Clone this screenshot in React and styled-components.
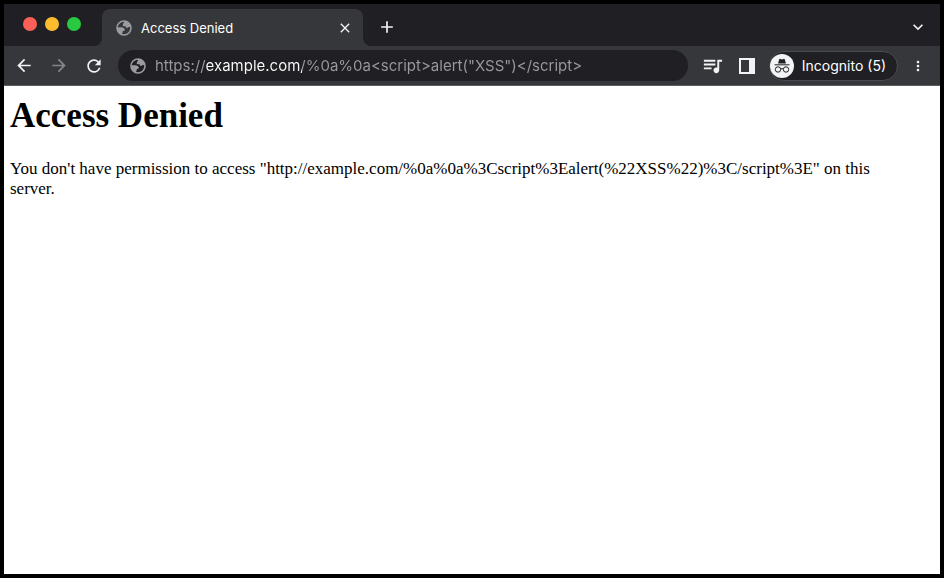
import React, {useState} from 'react';
import styled, {createGlobalStyle} from 'styled-components';
import {
    MdAdd,
    MdArrowBack,
    MdArrowForward,
    MdClose,
    MdKeyboardArrowDown,
    MdMoreVert,
    MdQueueMusic,
    MdRefresh
} from 'react-icons/md';

const color = {
    frame: '#202024',
    toolbar: '#36373a',
    line: '#5c5d60',
    muted: '#9a9b9e',
    icon: '#f1f3f4'
};

const GlobalStyle = createGlobalStyle`
    * {
        box-sizing: border-box;
    }
    body {
        margin: 0;
        background: black;
    }
`

const Window = styled.div`
    display: flex;
    flex-direction: column;
    min-height: 100vh;
    border: 4px solid black;
    background: white;
    font-family: Inter, "Liberation Sans", sans-serif;
`

/* the lower half shows through the rounded bottom corners beside the tab */
const TabStrip = styled.div`
    display: flex;
    height: 42px;
    background: linear-gradient(${color.frame} 50%, ${color.toolbar} 50%);
`

const WindowControls = styled.div`
    display: flex;
    flex: none;
    gap: 8px;
    width: 98px;
    padding: 13px 0 0 19px;
    border-bottom-right-radius: 8px;
    background: ${color.frame};
`

const Light = styled.button`
    width: 14px;
    height: 14px;
    padding: 0;
    border: none;
    border-radius: 50%;
    background: ${props => props.$fill};
`

const Tab = styled.div`
    display: flex;
    align-items: center;
    flex: 0 1 261px;
    gap: 9px;
    margin-top: 5px;
    padding: 0 8px 0 14px;
    border-radius: 8px 8px 0 0;
    background: ${color.toolbar};
    color: white;
`

const TabTitle = styled.span`
    flex: 1;
    overflow: hidden;
    white-space: nowrap;
    font-size: 13px;
    line-height: 20px;
`

const StripRest = styled.div`
    display: flex;
    align-items: center;
    justify-content: space-between;
    flex: 1;
    padding: 4px 12px 0 14px;
    border-bottom-left-radius: 8px;
    background: ${color.frame};
`

const IconButton = styled.button`
    display: flex;
    align-items: center;
    justify-content: center;
    flex: none;
    width: ${props => props.$width || 20}px;
    height: 20px;
    padding: 0;
    border: none;
    background: none;
    color: ${props => props.disabled ? '#85868a' : color.icon};
`

const Toolbar = styled.div`
    display: flex;
    align-items: center;
    height: 40px;
    padding: 0 14px 0 10px;
    border-bottom: 1px solid ${color.line};
    background: ${color.toolbar};
`

const ButtonGroup = styled.div`
    display: flex;
    align-items: center;
    gap: 15px;
    margin-right: 14px;
`

const AddressBar = styled.label`
    display: flex;
    align-items: center;
    flex: 1;
    gap: 9px;
    height: 31px;
    padding: 0 12px;
    border-radius: 16px;
    background: ${color.frame};
    color: ${color.muted};
`

/* the host part of the address is brighter than the rest */
const AddressInput = styled.input`
    flex: 1;
    min-width: 0;
    height: 24px;
    padding: 0;
    border: none;
    outline: none;
    background: linear-gradient(
        to right,
        ${color.muted} 51px,
        white 51px,
        white 147px,
        ${color.muted} 147px
    );
    background-clip: text;
    color: transparent;
    caret-color: white;
    font-family: inherit;
    font-size: 15px;
    line-height: 24px;
`

const Actions = styled.div`
    display: flex;
    align-items: center;
    gap: 12px;
    margin-left: 13px;
`

const Profile = styled.button`
    display: flex;
    align-items: center;
    gap: 8px;
    height: 30px;
    padding: 0 11px 0 0;
    border: 1px solid #4a4b4e;
    border-radius: 15px;
    background: ${color.frame};
    color: white;
    font-family: inherit;
    font-size: 14px;
    line-height: 20px;
    white-space: nowrap;
`

const Page = styled.main`
    flex: 1;
    padding: 10px 40px 10px 6px;
    color: black;
    font-family: "Liberation Serif", serif;
`

const Heading = styled.h1`
    margin: 0 0 23px;
    font-size: 35px;
    line-height: 40px;
`

const Message = styled.p`
    margin: 0;
    font-size: 17px;
    line-height: 20px;
`

const lights = [
    {name: 'Close window', fill: '#ff5f57'},
    {name: 'Minimize window', fill: '#febc2e'},
    {name: 'Zoom window', fill: '#28c840'}
];

const GlobeIcon = () => (
    <svg width="16" height="16" viewBox="0 0 16 16" aria-hidden="true">
        <circle cx="8" cy="8" r="7" fill="none" stroke={color.muted} strokeWidth="1.600"/>
        <path
            fill={color.muted}
            d="M8.200 1c-.2 1 .3 1.300-.7 2.200-.9.800-.3 1.400-.9 2.300.6.900 1.700.7 2.700.8.700.1.500 1.500 1.300 1.700 1.300.3 1.400-.9 2.300-.9H15C14.800 3.600 11.800 1 8.200 1z"/>
        <path
            fill={color.muted}
            d="M1.200 7.200h4.300c1.500 0 3.300 1.200 3.300 2.600 0 1-.9 1.200-1.900 1.300-.4 1.200.1 1.700-.9 2.400l.3 1.300C3.200 14 1 11.200 1.200 7.200z"/>
    </svg>
)

const SidePanelIcon = () => (
    <svg width="16" height="16" viewBox="0 0 16 16" aria-hidden="true">
        <path fill="currentColor" fillRule="evenodd" d="M0 0h16v16H0zM2 2v12h8V2z"/>
    </svg>
)

const IncognitoIcon = () => (
    <svg width="24" height="24" viewBox="0 0 24 24" aria-hidden="true">
        <circle cx="12" cy="12" r="12" fill="#f1f3f4"/>
        <path fill="#202124" d="M8 9.500l1.200-4c.2-.6.7-.8 1.200-.6l1.600.5 1.600-.5c.5-.2 1 0 1.200.6l1.200 4z"/>
        <path fill="#202124" d="M4.500 10.300h15v1h-15z"/>
        <g fill="none" stroke="#202124">
            <circle cx="8" cy="15.500" r="2.700"/>
            <circle cx="16" cy="15.500" r="2.700"/>
            <path d="M10.700 15q1.300-.8 2.600 0"/>
        </g>
    </svg>
)

const App = () => {
    const [address, setAddress] = useState('https://example.com/%0a%0a<script>alert("XSS")</script>');

    return (
        <Window>
            <GlobalStyle/>
            <TabStrip>
                <WindowControls>
                    {lights.map(light => (
                        <Light key={light.name} aria-label={light.name} $fill={light.fill}/>
                    ))}
                </WindowControls>
                <Tab>
                    <GlobeIcon/>
                    <TabTitle>Access Denied</TabTitle>
                    <IconButton aria-label="Close tab"><MdClose size={16}/></IconButton>
                </Tab>
                <StripRest>
                    <IconButton aria-label="New tab"><MdAdd size={22}/></IconButton>
                    <IconButton aria-label="Search tabs"><MdKeyboardArrowDown size={20}/></IconButton>
                </StripRest>
            </TabStrip>
            <Toolbar>
                <ButtonGroup>
                    <IconButton aria-label="Back"><MdArrowBack size={21}/></IconButton>
                    <IconButton aria-label="Forward" disabled><MdArrowForward size={21}/></IconButton>
                    <IconButton aria-label="Reload"><MdRefresh size={22}/></IconButton>
                </ButtonGroup>
                <AddressBar>
                    <GlobeIcon/>
                    <AddressInput
                        aria-label="Address"
                        spellCheck={false}
                        value={address}
                        onChange={e => setAddress(e.target.value)}/>
                </AddressBar>
                <Actions>
                    <IconButton aria-label="Media" $width={24}><MdQueueMusic size={23}/></IconButton>
                    <IconButton aria-label="Side panel"><SidePanelIcon/></IconButton>
                    <Profile>
                        <IncognitoIcon/>
                        Incognito (5)
                    </Profile>
                    <IconButton aria-label="Menu" $width={16}><MdMoreVert size={22}/></IconButton>
                </Actions>
            </Toolbar>
            <Page>
                <Heading>Access Denied</Heading>
                <Message>
                    You don't have permission to access "http://example.com/%0a%0a%3Cscript%3Ealert(%22XSS%22)%3C/script%3E" on this server.
                </Message>
            </Page>
        </Window>
    );
}

export default App;
